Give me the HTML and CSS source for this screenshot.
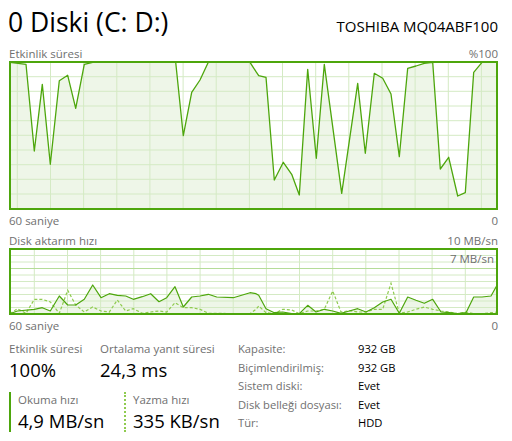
FILE: index.html
```html
<!DOCTYPE html>
<html>
<head>
<meta charset="utf-8">
<link rel="stylesheet" href="styles.css">
</head>
<body>
<div class="page">
  <div class="header">
    <div class="title">0 Diski (C: D:)</div>
    <div class="model">TOSHIBA MQ04ABF100</div>
  </div>
  <div class="axis top-axis"><span>Etkinlik süresi</span><span>%100</span></div>
  <svg class="chart chart-activity" width="489" height="149" viewBox="9 61 489 149">
    <rect x="10" y="62" width="487" height="146" fill="#fff"/>
    <polygon fill="#eef6e8" points="10,62.3 26,64.3 34.3,151 42.3,84.3 50.3,164.3 59.3,80.7 67.7,75.3 75.7,108.3 84.3,64.3 92.7,62.3 175.7,62.3 183.3,135.7 191.7,92.3 200,80 208.3,62.3 250,62.3 256,71.7 258.7,75.7 266,77.3 274.3,180 283.3,162.3 291.7,174.3 299.3,195 307.7,69.3 316.3,158.3 324.3,64.3 341.7,193.3 357.7,83.3 365.3,153.3 374.3,73.3 382.7,78.3 391,94 399.3,156.7 407.7,68.3 416,66 424.3,63.3 432.7,62.3 440.3,169 448.7,157.3 457.7,196 465.3,192.7 473.7,72.3 482,62.3 497,62.3 497,208 10,208"/>
    <g stroke="#d4eac4" stroke-width="1">
      <line x1="10" x2="497" y1="76.7" y2="76.7"/><line x1="10" x2="497" y1="91.3" y2="91.3"/><line x1="10" x2="497" y1="106" y2="106"/><line x1="10" x2="497" y1="120.7" y2="120.7"/><line x1="10" x2="497" y1="135.3" y2="135.3"/><line x1="10" x2="497" y1="150" y2="150"/><line x1="10" x2="497" y1="164.7" y2="164.7"/><line x1="10" x2="497" y1="179.3" y2="179.3"/><line x1="10" x2="497" y1="194" y2="194"/>
      <line y1="62" y2="208" x1="17.3" x2="17.3"/><line y1="62" y2="208" x1="50.5" x2="50.5"/><line y1="62" y2="208" x1="83.6" x2="83.6"/><line y1="62" y2="208" x1="116.8" x2="116.8"/><line y1="62" y2="208" x1="149.9" x2="149.9"/><line y1="62" y2="208" x1="183.1" x2="183.1"/><line y1="62" y2="208" x1="216.2" x2="216.2"/><line y1="62" y2="208" x1="249.4" x2="249.4"/><line y1="62" y2="208" x1="282.5" x2="282.5"/><line y1="62" y2="208" x1="315.7" x2="315.7"/><line y1="62" y2="208" x1="348.8" x2="348.8"/><line y1="62" y2="208" x1="382" x2="382"/><line y1="62" y2="208" x1="415.1" x2="415.1"/><line y1="62" y2="208" x1="448.3" x2="448.3"/><line y1="62" y2="208" x1="481.4" x2="481.4"/>
    </g>
    <polyline fill="none" stroke="#4da60c" stroke-width="1.3" stroke-linejoin="round" points="10,62.3 26,64.3 34.3,151 42.3,84.3 50.3,164.3 59.3,80.7 67.7,75.3 75.7,108.3 84.3,64.3 92.7,62.3 175.7,62.3 183.3,135.7 191.7,92.3 200,80 208.3,62.3 250,62.3 256,71.7 258.7,75.7 266,77.3 274.3,180 283.3,162.3 291.7,174.3 299.3,195 307.7,69.3 316.3,158.3 324.3,64.3 341.7,193.3 357.7,83.3 365.3,153.3 374.3,73.3 382.7,78.3 391,94 399.3,156.7 407.7,68.3 416,66 424.3,63.3 432.7,62.3 440.3,169 448.7,157.3 457.7,196 465.3,192.7 473.7,72.3 482,62.3 497,62.3"/>
    <rect x="10" y="62" width="487" height="147" fill="none" stroke="#4da60c" stroke-width="2"/>
  </svg>
  <div class="axis under-axis"><span>60 saniye</span><span>0</span></div>
  <div class="axis top-axis second"><span>Disk aktarım hızı</span><span>10 MB/sn</span></div>
  <div class="chart-wrap">
    <svg class="chart chart-transfer" width="489" height="67" viewBox="9 247 489 67">
      <rect x="10" y="248" width="487" height="65" fill="#fff"/>
      <polygon fill="#eef6e8" points="10,312.7 17.3,310 34.3,308.3 42.3,306.7 50.3,310 59.3,295 67.7,304 75.7,304 84.3,298.3 92.7,284 101,296.7 109.3,292.7 117.3,294.3 125.7,295 133.3,298.3 142.3,295.7 150.7,292.7 159,300.7 166.7,296.7 175,285.7 183.3,306 191.7,296 200,295 208.3,293.3 216.7,296 233.3,296.7 250,291.7 256,292.7 258.7,294.3 266,307.7 274.3,311.7 282.7,311 291.7,312.7 299.3,312.7 307.7,304.3 316,311 324.3,308.3 332.7,310 341,312.3 349.3,310 357.7,307.7 366,311 374.3,306.7 382.7,301 391,298.3 399.3,312.3 407.7,296 416,299.3 424.3,302.3 432.7,298.3 441,311 449.3,311.7 457.7,312.7 466,311.7 473.7,296 482,296 491,295 497,284.3 497,313 10,313"/>
      <g stroke="#d4eac4" stroke-width="1">
        <line x1="10" x2="497" y1="254.5" y2="254.5"/><line x1="10" x2="497" y1="261" y2="261"/><line x1="10" x2="497" y1="274" y2="274"/><line x1="10" x2="497" y1="280.5" y2="280.5"/><line x1="10" x2="497" y1="287" y2="287"/><line x1="10" x2="497" y1="293.5" y2="293.5"/><line x1="10" x2="497" y1="300" y2="300"/><line x1="10" x2="497" y1="306.5" y2="306.5"/>
        <line y1="248" y2="313" x1="34.3" x2="34.3"/><line y1="248" y2="313" x1="67.5" x2="67.5"/><line y1="248" y2="313" x1="100.6" x2="100.6"/><line y1="248" y2="313" x1="133.8" x2="133.8"/><line y1="248" y2="313" x1="166.9" x2="166.9"/><line y1="248" y2="313" x1="200.1" x2="200.1"/><line y1="248" y2="313" x1="233.2" x2="233.2"/><line y1="248" y2="313" x1="266.4" x2="266.4"/><line y1="248" y2="313" x1="299.5" x2="299.5"/><line y1="248" y2="313" x1="332.7" x2="332.7"/><line y1="248" y2="313" x1="365.8" x2="365.8"/><line y1="248" y2="313" x1="399" x2="399"/><line y1="248" y2="313" x1="432.1" x2="432.1"/><line y1="248" y2="313" x1="465.3" x2="465.3"/>
      </g>
      <line x1="10" x2="497" y1="267.5" y2="267.5" stroke="#b5dc98" stroke-width="1.2"/>
      <polyline fill="none" stroke="#8fcb4f" stroke-width="1.2" stroke-dasharray="3 2" points="10,312.7 17.3,307.7 26,312.3 34.3,298.3 42.3,298.3 50.3,301 59.3,312.3 67.7,289.3 75.7,304 84.3,311 92.7,306 101,310 109.3,311 117.3,299 125.7,310 133.3,307.7 142.3,312.3 150.7,311 159,310 166.7,311 175,301.7 183.3,306.7 191.7,306.7 200,308.3 208.3,312.3 250,312.7 256,308.3 258.7,305 266,311.7 274.3,312.7 282.7,308.3 291.7,309 299.3,312.7 307.7,310 316,310 324.3,308.3 332.7,290 341,311 349.3,309.7 357.7,311 366,311 374.3,308.3 382.7,308.3 391,282.3 399.3,312.3 407.7,311 416,308.3 424.3,306 432.7,308.3 441,310 449.3,311 457.7,312.7 466,311 473.7,312.7 482,312.7 491,311.7 497,311"/>
      <polyline fill="none" stroke="#4da60c" stroke-width="1.2" stroke-linejoin="round" points="10,312.7 17.3,310 34.3,308.3 42.3,306.7 50.3,310 59.3,295 67.7,304 75.7,304 84.3,298.3 92.7,284 101,296.7 109.3,292.7 117.3,294.3 125.7,295 133.3,298.3 142.3,295.7 150.7,292.7 159,300.7 166.7,296.7 175,285.7 183.3,306 191.7,296 200,295 208.3,293.3 216.7,296 233.3,296.7 250,291.7 256,292.7 258.7,294.3 266,307.7 274.3,311.7 282.7,311 291.7,312.7 299.3,312.7 307.7,304.3 316,311 324.3,308.3 332.7,310 341,312.3 349.3,310 357.7,307.7 366,311 374.3,306.7 382.7,301 391,298.3 399.3,312.3 407.7,296 416,299.3 424.3,302.3 432.7,298.3 441,311 449.3,311.7 457.7,312.7 466,311.7 473.7,296 482,296 491,295 497,284.3"/>
      <rect x="10" y="248" width="487" height="65" fill="none" stroke="#4da60c" stroke-width="2"/>
    </svg>
    <span class="scale-mark">7 MB/sn</span>
  </div>
  <div class="axis under-axis"><span>60 saniye</span><span>0</span></div>

  <div class="stats">
    <div class="stats-left">
      <div class="metric-row">
        <div class="metric metric-activity">
          <div class="metric-label">Etkinlik süresi</div>
          <div class="metric-value">100%</div>
        </div>
        <div class="metric">
          <div class="metric-label">Ortalama yanıt süresi</div>
          <div class="metric-value">24,3 ms</div>
        </div>
      </div>
      <div class="metric-row rates">
        <div class="metric rate rate-read">
          <div class="metric-label">Okuma hızı</div>
          <div class="metric-value">4,9 MB/sn</div>
        </div>
        <div class="metric rate rate-write">
          <div class="metric-label">Yazma hızı</div>
          <div class="metric-value">335 KB/sn</div>
        </div>
      </div>
    </div>
    <dl class="props">
      <dt>Kapasite:</dt><dd>932 GB</dd>
      <dt>Biçimlendirilmiş:</dt><dd>932 GB</dd>
      <dt>Sistem diski:</dt><dd>Evet</dd>
      <dt>Disk belleği dosyası:</dt><dd>Evet</dd>
      <dt>Tür:</dt><dd>HDD</dd>
    </dl>
  </div>
</div>
</body>
</html>
```

FILE: styles.css
```css
* { box-sizing: border-box; }
html, body { margin: 0; padding: 0; background: #fff; }
body {
  font-family: "Open Sans", "Noto Sans", sans-serif;
  color: #000;
}
.page {
  width: 512px;
  padding: 6px 14px 0 9px;
}
.header {
  display: flex;
  justify-content: space-between;
  align-items: baseline;
  height: 40px;
}
.title {
  font-size: 26.5px;
  line-height: 34px;
  margin-left: -1px;
  margin-top: -1px;
}
.model {
  font-size: 15px;
  line-height: 20px;
}
.axis {
  display: flex;
  justify-content: space-between;
  font-size: 11.5px;
  line-height: 15px;
  color: #707070;
}
.top-axis { height: 15px; }
.under-axis { height: 20px; padding-top: 3px; }
.second { margin-top: 0; height: 18px; padding-top: 3px; }
.chart { display: block; }
.chart-wrap { position: relative; }
.scale-mark {
  position: absolute;
  right: 4px;
  top: 3px;
  font-size: 11.5px;
  line-height: 15px;
  color: #707070;
}
.stats {
  display: flex;
  margin-top: 6px;
}
.stats-left {
  width: 229px;
}
.metric-row { display: flex; }
.metric-activity { width: 91px; }
.metric-label {
  font-size: 11.5px;
  line-height: 16px;
  color: #707070;
}
.metric-value {
  font-size: 18.5px;
  line-height: 26px;
}
.rates { margin-top: 9px; }
.rate {
  padding-left: 7px;
  height: 40px;
}
.rate-read {
  width: 115px;
  border-left: 2px solid #4da60c;
}
.rate-write {
  border-left: 2px dotted #8fcb4f;
}
.props {
  margin: 0;
  display: grid;
  grid-template-columns: 120px auto;
  row-gap: 2px;
  font-size: 11.2px;
  line-height: 16.3px;
}
.props dt { color: #707070; }
.props dd { margin: 0; color: #000; }
```
